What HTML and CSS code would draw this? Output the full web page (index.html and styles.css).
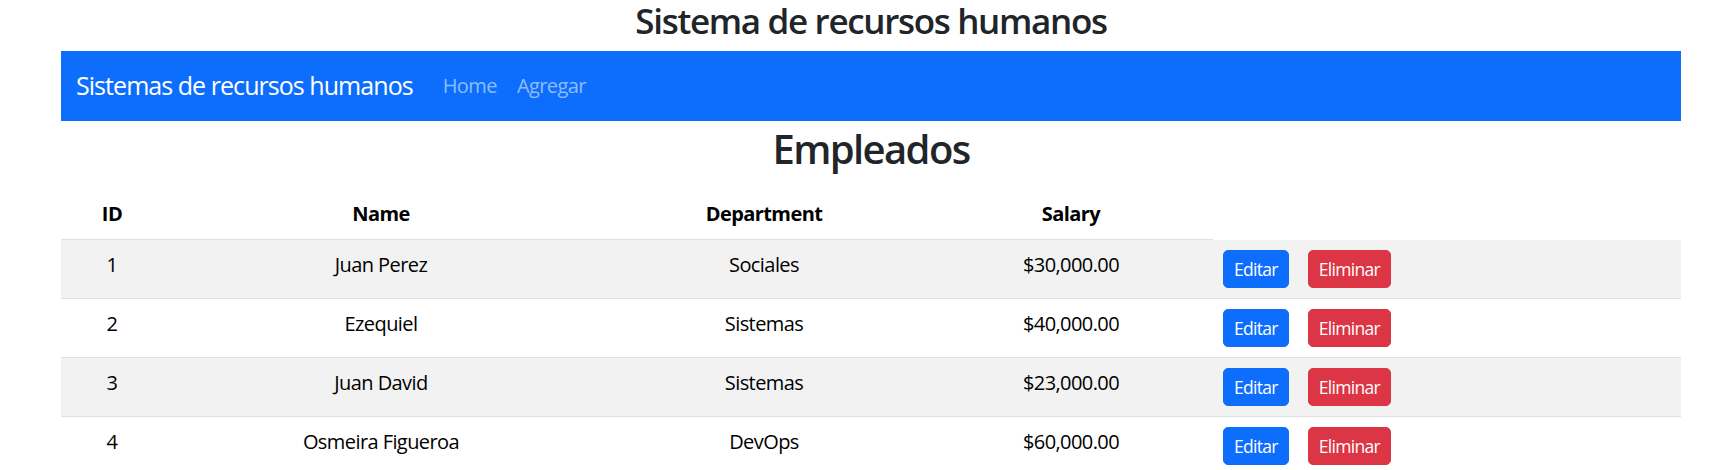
FILE: index.html
```html
<!DOCTYPE html>
<html lang="es">
<head>
<meta charset="utf-8">
<title>Sistema de recursos humanos</title>
<link rel="stylesheet" href="styles.css">
</head>
<body>
<div class="page">
  <h3 class="title">Sistema de recursos humanos</h3>
  <nav class="navbar">
    <a class="brand" href="#">Sistemas de recursos humanos</a>
    <ul class="nav">
      <li><a class="nav-link" href="#">Home</a></li>
      <li><a class="nav-link" href="#">Agregar</a></li>
    </ul>
  </nav>
  <h2 class="heading">Empleados</h2>
  <table class="table">
    <colgroup>
      <col class="c-id"><col class="c-name"><col class="c-dep"><col class="c-sal"><col class="c-act">
    </colgroup>
    <thead>
      <tr><th>ID</th><th>Name</th><th>Department</th><th>Salary</th></tr>
    </thead>
    <tbody>
      <tr><td>1</td><td>Juan Perez</td><td>Sociales</td><td>$30,000.00</td><td class="actions"><div class="btns"><a class="btn btn-primary" href="#">Editar</a><a class="btn btn-danger" href="#">Eliminar</a></div></td></tr>
      <tr><td>2</td><td>Ezequiel</td><td>Sistemas</td><td>$40,000.00</td><td class="actions"><div class="btns"><a class="btn btn-primary" href="#">Editar</a><a class="btn btn-danger" href="#">Eliminar</a></div></td></tr>
      <tr><td>3</td><td>Juan David</td><td>Sistemas</td><td>$23,000.00</td><td class="actions"><div class="btns"><a class="btn btn-primary" href="#">Editar</a><a class="btn btn-danger" href="#">Eliminar</a></div></td></tr>
      <tr><td>4</td><td>Osmeira Figueroa</td><td>DevOps</td><td>$60,000.00</td><td class="actions"><div class="btns"><a class="btn btn-primary" href="#">Editar</a><a class="btn btn-danger" href="#">Eliminar</a></div></td></tr>
    </tbody>
  </table>
</div>
</body>
</html>
```

FILE: styles.css
```css
body {
  margin: 0;
  font-family: "Open Sans", "Noto Sans", sans-serif;
  letter-spacing: -0.036em;
  color: #212529;
  background: #fff;
}

.page {
  width: 1620px;
  margin-left: 61px;
}

.title {
  margin: 0 0 10px;
  font-size: 35px;
  line-height: 41px;
  font-weight: 600;
  letter-spacing: -0.038em;
  text-align: center;
}

.navbar {
  display: flex;
  align-items: center;
  height: 70px;
  padding: 0 15px;
  box-sizing: border-box;
  background: #0d6efd;
}

.brand {
  font-size: 25px;
  line-height: 37.5px;
  letter-spacing: -0.038em;
  color: #fff;
  text-decoration: none;
  margin-right: 20px;
}

.nav {
  display: flex;
  list-style: none;
  margin: 0;
  padding: 0;
}

.nav-link {
  display: block;
  padding: 10px;
  font-size: 20px;
  line-height: 30px;
  color: rgba(255, 255, 255, 0.55);
  text-decoration: none;
}

.heading {
  margin: 4px 0 16px;
  font-size: 40px;
  line-height: 48px;
  font-weight: 600;
  letter-spacing: -0.04em;
  text-align: center;
}

.table {
  width: 100%;
  border-collapse: collapse;
  table-layout: fixed;
  font-size: 20px;
  line-height: 30px;
  color: #000;
}

.c-id { width: 102px; }
.c-name { width: 436px; }
.c-dep { width: 330px; }
.c-sal { width: 284px; }
.c-act { width: 468px; }

.table th,
.table td {
  padding: 10px;
  vertical-align: top;
  text-align: center;
  border-bottom: 1px solid #dee2e6;
}

.table th {
  font-weight: 700;
}

.table tbody tr:nth-child(odd) td {
  background: #f2f2f2;
}

.table td.actions {
  text-align: left;
}

.btns {
  display: flex;
  gap: 19px;
}

.btn {
  display: inline-block;
  padding: 5px 10px;
  font-size: 17.5px;
  line-height: 26px;
  letter-spacing: -0.04em;
  border: 1px solid transparent;
  border-radius: 5px;
  color: #fff;
  text-decoration: none;
}

.btn-primary {
  background: #0d6efd;
  border-color: #0d6efd;
}

.btn-danger {
  background: #dc3545;
  border-color: #dc3545;
}
```
